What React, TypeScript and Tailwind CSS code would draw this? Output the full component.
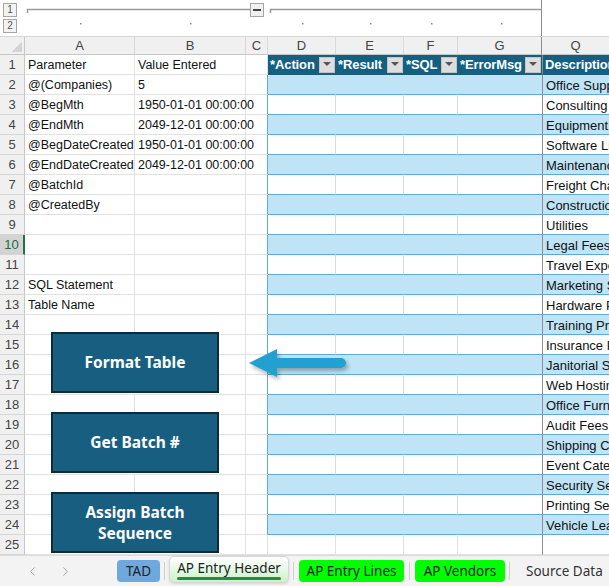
import { ChevronLeft, ChevronRight } from "lucide-react";

const colA: Record<number, string> = {
  1: "Parameter",
  2: "@(Companies)",
  3: "@BegMth",
  4: "@EndMth",
  5: "@BegDateCreated",
  6: "@EndDateCreated",
  7: "@BatchId",
  8: "@CreatedBy",
  12: "SQL Statement",
  13: "Table Name",
};

const colB: Record<number, string> = {
  1: "Value Entered",
  2: "5",
  3: "1950-01-01 00:00:00",
  4: "2049-12-01 00:00:00",
  5: "1950-01-01 00:00:00",
  6: "2049-12-01 00:00:00",
};

const descriptions = [
  "Office Supplies",
  "Consulting Services",
  "Equipment Rental",
  "Software License",
  "Maintenance",
  "Freight Charges",
  "Construction Materials",
  "Utilities",
  "Legal Fees",
  "Travel Expenses",
  "Marketing Services",
  "Hardware Purchase",
  "Training Programs",
  "Insurance Premium",
  "Janitorial Services",
  "Web Hosting",
  "Office Furniture",
  "Audit Fees",
  "Shipping Costs",
  "Event Catering",
  "Security Services",
  "Printing Services",
  "Vehicle Lease",
];

const rows = Array.from({ length: 25 }, (_, i) => i + 1);

function Dropdown() {
  return (
    <div className="ml-auto mr-[1px] w-[16px] h-[16px] shrink-0 bg-[#dedede] border border-[#c4c4c4] flex items-start justify-center pt-[4px]">
      <div className="w-0 h-0 border-l-[4px] border-r-[4px] border-t-[4px] border-l-transparent border-r-transparent border-t-[#555]" />
    </div>
  );
}

function HeadCell({ w, label, last }: { w: string; label: string; last?: boolean }) {
  return (
    <div
      className={`${w} h-[20px] shrink-0 bg-[#156082] border-b border-[#156082] flex items-center pl-[2px] text-white font-bold text-[13px] overflow-hidden whitespace-nowrap ${
        last ? "border-l border-l-[#8c8c8c]" : ""
      }`}
    >
      <span className="tracking-[-0.1px]">{label}</span>
      {!last && <Dropdown />}
    </div>
  );
}

function TableCell({ w, band }: { w: string; band: boolean }) {
  return (
    <div
      className={`${w} h-[20px] shrink-0 border-b border-b-[#5aabdc] border-r ${
        band ? "bg-[#c0e4f5] border-r-[#c0e4f5]" : "bg-white border-r-[#dadada]"
      }`}
    />
  );
}

function Cell({ w, children, nowrap }: { w: string; children?: React.ReactNode; nowrap?: boolean }) {
  return (
    <div
      className={`${w} h-[20px] shrink-0 border-r border-b border-[#e1e1e1] flex items-center pl-[3px] pt-[2px] text-[12.5px] text-[#111] whitespace-nowrap ${
        nowrap ? "overflow-visible relative z-10" : "overflow-hidden"
      }`}
    >
      {children}
    </div>
  );
}

function Row({ r }: { r: number }) {
  const inTable = r >= 2 && r <= 24;
  const band = r % 2 === 0;
  const selected = r === 10;
  return (
    <div className="flex">
      <div
        className={`w-[25px] h-[20px] shrink-0 border-b border-[#d5d5d5] flex items-center justify-center pt-[1px] text-[13px] ${
          selected
            ? "bg-[#d3d3d3] text-[#1e6b3e] border-r-2 border-r-[#217346]"
            : "bg-[#f0f0f0] text-[#444] border-r border-r-[#c6c6c6]"
        }`}
      >
        {r}
      </div>
      <Cell w="w-[110px]">{colA[r]}</Cell>
      <Cell w="w-[111px]" nowrap>
        {colB[r]}
      </Cell>
      <div
        className={`w-[22px] h-[20px] shrink-0 border-b border-b-[#e1e1e1] border-r ${
          inTable ? "border-r-[#5aabdc]" : "border-r-[#e1e1e1]"
        }`}
      />
      {r === 1 ? (
        <>
          <HeadCell w="w-[68px]" label="*Action" />
          <HeadCell w="w-[68px]" label="*Result" />
          <HeadCell w="w-[54px]" label="*SQL" />
          <HeadCell w="w-[84px]" label="*ErrorMsg" />
          <HeadCell w="w-[67px]" label="Description" last />
        </>
      ) : inTable ? (
        <>
          <TableCell w="w-[68px]" band={band} />
          <TableCell w="w-[68px]" band={band} />
          <TableCell w="w-[54px]" band={band} />
          <div
            className={`w-[84px] h-[20px] shrink-0 border-b border-b-[#5aabdc] ${
              band ? "bg-[#c0e4f5]" : "bg-white"
            }`}
          />
          <div
            className={`w-[67px] h-[20px] shrink-0 border-b border-b-[#5aabdc] border-l border-l-[#8c8c8c] flex items-center pl-[3px] pt-[2px] text-[13px] text-[#111] whitespace-nowrap overflow-hidden ${
              band ? "bg-[#c0e4f5]" : "bg-white"
            }`}
          >
            {descriptions[r - 2]}
          </div>
        </>
      ) : (
        <>
          <Cell w="w-[68px]" />
          <Cell w="w-[68px]" />
          <Cell w="w-[54px]" />
          <div className="w-[84px] h-[20px] shrink-0 border-b border-[#e1e1e1]" />
          <div className="w-[67px] h-[20px] shrink-0 border-b border-[#e1e1e1] border-l border-l-[#8c8c8c]" />
        </>
      )}
    </div>
  );
}

function MacroButton({ children }: { children: React.ReactNode }) {
  return (
    <div className="w-[168px] h-[61px] bg-[#175e81] border-2 border-[#0e2b3c] flex items-center justify-center text-center text-white font-bold text-[15.5px] leading-[21px] font-['Noto_Sans',sans-serif]">
      {children}
    </div>
  );
}

export default function App() {
  const heads = [
    { w: "w-[110px]", l: "A" },
    { w: "w-[111px]", l: "B" },
    { w: "w-[22px]", l: "C" },
    { w: "w-[68px]", l: "D" },
    { w: "w-[68px]", l: "E" },
    { w: "w-[54px]", l: "F" },
    { w: "w-[84px]", l: "G" },
  ];

  return (
    <div className="relative w-[609px] h-[586px] overflow-hidden bg-white font-['Liberation_Sans',Arial,sans-serif]">
      {/* outline bar */}
      <div className="relative h-[37px] flex border-b border-[#d5d5d5]">
        <div className="w-[25px] flex flex-col items-start pl-[3px] pt-[3px] gap-[2px]">
          <div className="w-[14px] h-[14px] border border-[#a6a6a6] bg-[#f3f3f3] text-[10px] leading-[12px] text-center text-[#555]">1</div>
          <div className="w-[14px] h-[14px] border border-[#a6a6a6] bg-[#f3f3f3] text-[10px] leading-[12px] text-center text-[#555]">2</div>
        </div>
        <div className="w-[517px] border-r border-[#8c8c8c]" />
        <svg className="absolute left-0 top-0" width="542" height="37">
          <path d="M27.5 13 V9.5 H250" stroke="#9a9a9a" strokeWidth="1.5" fill="none" />
          <path d="M270.5 13 V9.5 H542" stroke="#9a9a9a" strokeWidth="1.5" fill="none" />
          {[80, 190, 302, 370, 431, 501].map((x) => (
            <rect key={x} x={x} y={23} width={1.5} height={1.5} fill="#888" />
          ))}
        </svg>
        <div className="absolute left-[250px] top-[3px] w-[14px] h-[14px] border border-[#a6a6a6] bg-[#f0f0f0] flex items-center justify-center">
          <div className="w-[8px] h-[2px] bg-[#444]" />
        </div>
      </div>

      {/* column headers */}
      <div className="flex h-[18px]">
        <div className="w-[25px] shrink-0 bg-[#f0f0f0] border-r border-b border-[#c6c6c6] flex items-end justify-end p-[2px]">
          <div className="w-[10px] h-[10px] bg-[linear-gradient(135deg,transparent_50%,#d4d4d4_50%)]" />
        </div>
        {heads.map((h) => (
          <div
            key={h.l}
            className={`${h.w} shrink-0 bg-[#f0f0f0] border-b border-b-[#c6c6c6] border-r flex items-center justify-center text-[13px] text-[#444] ${
              h.l === "G" ? "border-r-[#8c8c8c]" : "border-r-[#d8d8d8]"
            }`}
          >
            {h.l}
          </div>
        ))}
        <div className="w-[67px] shrink-0 bg-[#f0f0f0] border-b border-[#c6c6c6] flex items-center justify-center text-[13px] text-[#444]">
          Q
        </div>
      </div>

      {/* grid */}
      <div className="flex flex-col">
        {rows.map((r) => (
          <Row key={r} r={r} />
        ))}
      </div>

      {/* shapes on the sheet */}
      <div className="absolute left-[51px] top-[332px] flex flex-col gap-[19px] z-20">
        <MacroButton>Format Table</MacroButton>
        <MacroButton>Get Batch #</MacroButton>
        <MacroButton>
          Assign Batch
          <br />
          Sequence
        </MacroButton>
      </div>

      <svg className="absolute left-[244px] top-[344px] z-20" width="112" height="40">
        <defs>
          <filter id="sh" x="-20%" y="-40%" width="140%" height="180%">
            <feDropShadow dx="2" dy="3" stdDeviation="2" floodColor="#000" floodOpacity="0.3" />
          </filter>
        </defs>
        <path
          d="M5 19 L33 5 L33 14 L97 14 A5 5 0 0 1 97 24 L33 24 L33 33 Z"
          fill="#22a0d2"
          filter="url(#sh)"
        />
      </svg>

      {/* sheet tabs */}
      <div className="absolute left-0 bottom-0 w-[609px] h-[31px] bg-[#f3f3f3] border-t border-[#dcdcdc] flex items-center font-['Noto_Sans',sans-serif] text-[13.5px] text-[#222] whitespace-nowrap z-30">
        <div className="w-[100px] shrink-0 flex items-center pl-[25px] gap-[18px] text-[#9a9a9a]">
          <ChevronLeft size={15} strokeWidth={1.5} />
          <ChevronRight size={15} strokeWidth={1.5} />
        </div>
        <div className="flex items-center h-full">
          <div className="ml-[17px] h-[22px] w-[43px] rounded-[4px] bg-[#6fa8dc] flex items-center justify-center">TAD</div>
          <div className="mx-[4px] w-px h-[18px] bg-[#cfcfcf]" />
          <div className="h-[27px] self-end mb-[3px] w-[120px] rounded-[5px] border border-[#d6d6d6] bg-[linear-gradient(#ffffff,#c9f3c9)] shadow-sm flex flex-col items-center justify-center">
            <span className="leading-[18px]">AP Entry Header</span>
            <div className="w-[104px] h-[3px] rounded bg-[#2a8a3a]" />
          </div>
          <div className="ml-[4px] mr-[5px] w-px h-[18px] bg-[#cfcfcf]" />
          <div className="h-[22px] w-[105px] rounded-[4px] bg-[#00ff00] flex items-center justify-center">AP Entry Lines</div>
          <div className="mx-[5px] w-px h-[18px] bg-[#cfcfcf]" />
          <div className="h-[22px] w-[90px] rounded-[4px] bg-[#00ff00] flex items-center justify-center">AP Vendors</div>
          <div className="mx-[4px] w-px h-[18px] bg-[#cfcfcf]" />
          <div className="pl-[12px] pr-[14px] text-[#333]">Source Data</div>
          <div className="w-px h-[18px] bg-[#cfcfcf]" />
        </div>
      </div>
    </div>
  );
}
